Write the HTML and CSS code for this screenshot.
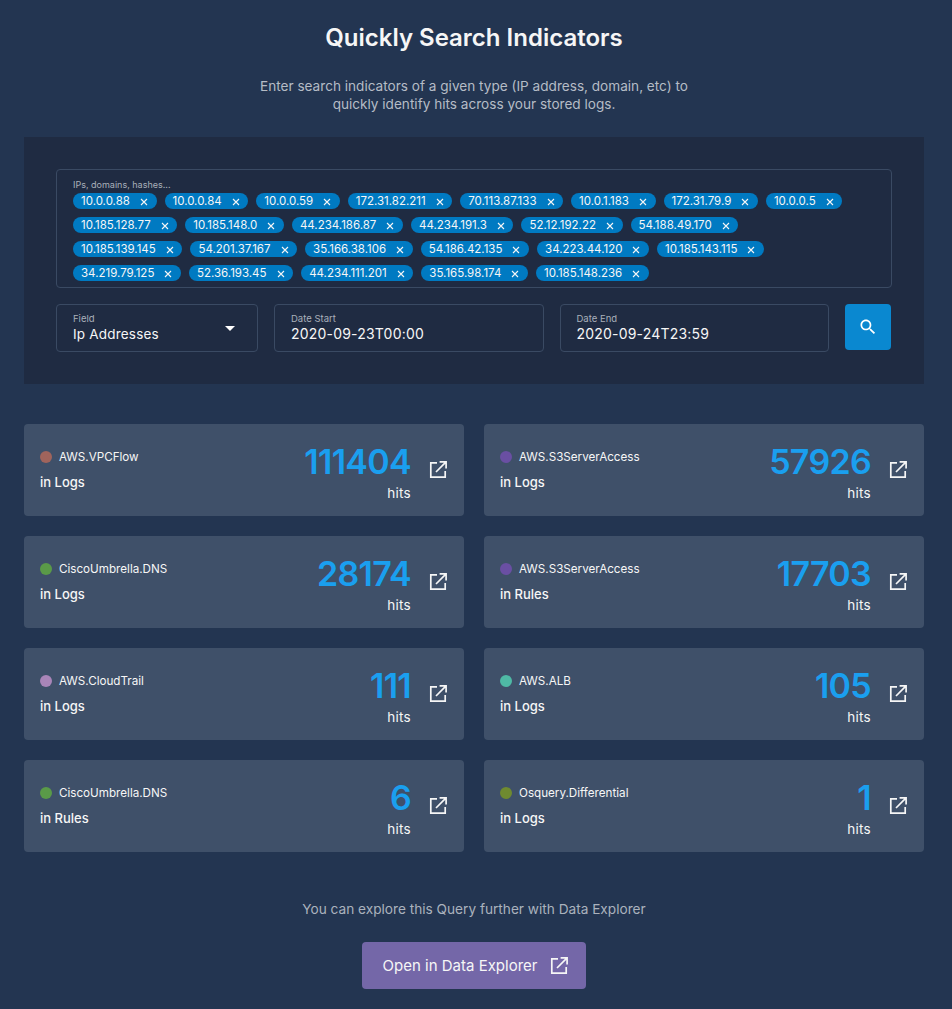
FILE: index.html
```html
<!DOCTYPE html>
<html lang="en">
<head>
  <meta charset="UTF-8">
  <meta name="viewport" content="width=device-width, initial-scale=1.0">
  <title>Quickly Search Indicators</title>
  <link rel="stylesheet" href="styles.css">
</head>
<body>
  <svg class="icon-defs" width="0" height="0">
    <symbol id="open-icon" viewBox="0 0 24 24">
      <path d="M11 4.8H4.8v14.4h14.4V13M13.6 3.9h6.5v6.5M19.8 4.2L10 14" fill="none" stroke="currentColor" stroke-width="1.7"/>
    </symbol>
    <symbol id="close-icon" viewBox="0 0 8 8">
      <path d="M1 1l6 6M7 1L1 7" fill="none" stroke="currentColor" stroke-width="1.1"/>
    </symbol>
  </svg>

  <h1 class="title">Quickly Search Indicators</h1>
  <p class="intro">Enter search indicators of a given type (IP address, domain, etc) to<br>quickly identify hits across your stored logs.</p>

  <section class="panel">
    <div class="chip-box">
      <div class="box-label">IPs, domains, hashes...</div>
      <div class="chip-row">
        <span class="chip">10.0.0.88<svg class="chip-x"><use href="#close-icon"/></svg></span>
        <span class="chip">10.0.0.84<svg class="chip-x"><use href="#close-icon"/></svg></span>
        <span class="chip">10.0.0.59<svg class="chip-x"><use href="#close-icon"/></svg></span>
        <span class="chip">172.31.82.211<svg class="chip-x"><use href="#close-icon"/></svg></span>
        <span class="chip">70.113.87.133<svg class="chip-x"><use href="#close-icon"/></svg></span>
        <span class="chip">10.0.1.183<svg class="chip-x"><use href="#close-icon"/></svg></span>
        <span class="chip">172.31.79.9<svg class="chip-x"><use href="#close-icon"/></svg></span>
        <span class="chip">10.0.0.5<svg class="chip-x"><use href="#close-icon"/></svg></span>
      </div>
      <div class="chip-row">
        <span class="chip">10.185.128.77<svg class="chip-x"><use href="#close-icon"/></svg></span>
        <span class="chip">10.185.148.0<svg class="chip-x"><use href="#close-icon"/></svg></span>
        <span class="chip">44.234.186.87<svg class="chip-x"><use href="#close-icon"/></svg></span>
        <span class="chip">44.234.191.3<svg class="chip-x"><use href="#close-icon"/></svg></span>
        <span class="chip">52.12.192.22<svg class="chip-x"><use href="#close-icon"/></svg></span>
        <span class="chip">54.188.49.170<svg class="chip-x"><use href="#close-icon"/></svg></span>
      </div>
      <div class="chip-row">
        <span class="chip">10.185.139.145<svg class="chip-x"><use href="#close-icon"/></svg></span>
        <span class="chip">54.201.37.167<svg class="chip-x"><use href="#close-icon"/></svg></span>
        <span class="chip">35.166.38.106<svg class="chip-x"><use href="#close-icon"/></svg></span>
        <span class="chip">54.186.42.135<svg class="chip-x"><use href="#close-icon"/></svg></span>
        <span class="chip">34.223.44.120<svg class="chip-x"><use href="#close-icon"/></svg></span>
        <span class="chip">10.185.143.115<svg class="chip-x"><use href="#close-icon"/></svg></span>
      </div>
      <div class="chip-row">
        <span class="chip">34.219.79.125<svg class="chip-x"><use href="#close-icon"/></svg></span>
        <span class="chip">52.36.193.45<svg class="chip-x"><use href="#close-icon"/></svg></span>
        <span class="chip">44.234.111.201<svg class="chip-x"><use href="#close-icon"/></svg></span>
        <span class="chip">35.165.98.174<svg class="chip-x"><use href="#close-icon"/></svg></span>
        <span class="chip">10.185.148.236<svg class="chip-x"><use href="#close-icon"/></svg></span>
      </div>
    </div>

    <div class="filters">
      <div class="field field-select">
        <div class="field-label">Field</div>
        <div class="field-value">Ip Addresses</div>
        <svg class="select-arrow" viewBox="0 0 24 24"><path d="M7 10l5 5 5-5z"/></svg>
      </div>
      <div class="field field-date">
        <div class="field-label">Date Start</div>
        <div class="field-value">2020-09-23T00:00</div>
      </div>
      <div class="field field-date">
        <div class="field-label">Date End</div>
        <div class="field-value">2020-09-24T23:59</div>
      </div>
      <button class="search-btn" aria-label="Search">
        <svg viewBox="0 0 24 24"><path d="M15.5 14h-.79l-.28-.27C15.41 12.59 16 11.11 16 9.5 16 5.91 13.09 3 9.5 3S3 5.91 3 9.5 5.91 16 9.5 16c1.61 0 3.09-.59 4.23-1.57l.27.28v.79l5 4.99L20.49 19l-4.99-5zm-6 0C7.01 14 5 11.99 5 9.5S7.01 5 9.5 5 14 7.01 14 9.5 11.99 14 9.5 14z"/></svg>
      </button>
    </div>
  </section>

  <section class="cards">
    <div class="card">
      <div class="card-info">
        <div class="log-type"><span class="dot dot-vpc"></span>AWS.VPCFlow</div>
        <div class="log-scope">in Logs</div>
      </div>
      <div class="hits"><div class="hits-count">111404</div><div class="hits-label">hits</div></div>
      <svg class="open-icon"><use href="#open-icon"/></svg>
    </div>
    <div class="card">
      <div class="card-info">
        <div class="log-type"><span class="dot dot-s3"></span>AWS.S3ServerAccess</div>
        <div class="log-scope">in Logs</div>
      </div>
      <div class="hits"><div class="hits-count">57926</div><div class="hits-label">hits</div></div>
      <svg class="open-icon"><use href="#open-icon"/></svg>
    </div>
    <div class="card">
      <div class="card-info">
        <div class="log-type"><span class="dot dot-cisco"></span>CiscoUmbrella.DNS</div>
        <div class="log-scope">in Logs</div>
      </div>
      <div class="hits"><div class="hits-count">28174</div><div class="hits-label">hits</div></div>
      <svg class="open-icon"><use href="#open-icon"/></svg>
    </div>
    <div class="card">
      <div class="card-info">
        <div class="log-type"><span class="dot dot-s3"></span>AWS.S3ServerAccess</div>
        <div class="log-scope">in Rules</div>
      </div>
      <div class="hits"><div class="hits-count">17703</div><div class="hits-label">hits</div></div>
      <svg class="open-icon"><use href="#open-icon"/></svg>
    </div>
    <div class="card">
      <div class="card-info">
        <div class="log-type"><span class="dot dot-trail"></span>AWS.CloudTrail</div>
        <div class="log-scope">in Logs</div>
      </div>
      <div class="hits"><div class="hits-count">111</div><div class="hits-label">hits</div></div>
      <svg class="open-icon"><use href="#open-icon"/></svg>
    </div>
    <div class="card">
      <div class="card-info">
        <div class="log-type"><span class="dot dot-alb"></span>AWS.ALB</div>
        <div class="log-scope">in Logs</div>
      </div>
      <div class="hits"><div class="hits-count">105</div><div class="hits-label">hits</div></div>
      <svg class="open-icon"><use href="#open-icon"/></svg>
    </div>
    <div class="card">
      <div class="card-info">
        <div class="log-type"><span class="dot dot-cisco"></span>CiscoUmbrella.DNS</div>
        <div class="log-scope">in Rules</div>
      </div>
      <div class="hits"><div class="hits-count">6</div><div class="hits-label">hits</div></div>
      <svg class="open-icon"><use href="#open-icon"/></svg>
    </div>
    <div class="card">
      <div class="card-info">
        <div class="log-type"><span class="dot dot-osquery"></span>Osquery.Differential</div>
        <div class="log-scope">in Logs</div>
      </div>
      <div class="hits"><div class="hits-count">1</div><div class="hits-label">hits</div></div>
      <svg class="open-icon"><use href="#open-icon"/></svg>
    </div>
  </section>

  <footer class="explore">
    <p class="explore-text">You can explore this Query further with Data Explorer</p>
    <button class="explore-btn">Open in Data Explorer<svg class="open-icon"><use href="#open-icon"/></svg></button>
  </footer>
</body>
</html>
```

FILE: styles.css
```css
html {
  box-sizing: border-box;
}
*, *:before, *:after {
  box-sizing: inherit;
}
body {
  margin: 0;
  padding: 24px 28px 20px 24px;
  min-height: 1009px;
  background-color: #233551;
  color: #f6f6f6;
  font-family: "Inter", "Noto Sans", sans-serif;
}
.icon-defs { position: absolute; }

.title {
  margin: 0;
  height: 28px;
  font-size: 24px;
  line-height: 28px;
  font-weight: 600;
  text-align: center;
}
.intro {
  margin: 25px 0 0;
  height: 41px;
  font-size: 13.6px;
  line-height: 18px;
  color: #b5bcc6;
  text-align: center;
}

.panel {
  margin-top: 19px;
  padding: 32px;
  height: 247px;
  background-color: #1f2b42;
}
.chip-box {
  height: 119px;
  padding: 9px 16px 0;
  border: 1px solid #3a4a63;
  border-radius: 4px;
}
.box-label {
  height: 14px;
  font-size: 9px;
  line-height: 11px;
  color: #a9b0ba;
}
.chip-row {
  display: flex;
  gap: 8px;
  margin-bottom: 8px;
}
.chip {
  display: flex;
  align-items: center;
  justify-content: space-between;
  height: 16px;
  padding: 0 8.6px 0 8px;
  border-radius: 8px;
  background-color: #007ac2;
  font-size: 11.5px;
  line-height: 16px;
  white-space: nowrap;
}
.chip-x {
  width: 8px;
  height: 8px;
  margin-left: 10px;
  margin-top: 1px;
}

.filters {
  display: flex;
  align-items: flex-start;
  gap: 16px;
  margin-top: 16px;
}
.field {
  position: relative;
  height: 48px;
  padding: 8px 16px 0;
  border: 1px solid #3a4a63;
  border-radius: 4px;
}
.field-select { width: 202px; }
.field-date { width: 269.5px; }
.field-label {
  height: 12px;
  font-size: 9.5px;
  line-height: 12px;
  color: #a9b0ba;
}
.field-value {
  margin-top: -1px;
  font-size: 14px;
  line-height: 20px;
  letter-spacing: .2px;
}
.field-select .field-value { font-size: 13.5px; }
.select-arrow {
  position: absolute;
  top: 11px;
  right: 15px;
  width: 24px;
  height: 24px;
  fill: #fff;
}
.search-btn {
  display: flex;
  align-items: center;
  justify-content: center;
  width: 46px;
  height: 46px;
  padding: 0;
  border: 0;
  border-radius: 4px;
  background-color: #0a88d0;
}
.search-btn svg {
  width: 20px;
  height: 20px;
  fill: #fff;
}

.cards {
  display: grid;
  grid-template-columns: 440px 440px;
  grid-auto-rows: 92px;
  gap: 20px;
  margin-top: 40px;
}
.card {
  display: flex;
  align-items: center;
  padding: 0 14px 0 16px;
  border-radius: 4px;
  background-color: #3f5069;
}
.card-info { flex: 1; }
.log-type {
  display: flex;
  align-items: center;
  font-size: 11.65px;
  line-height: 16px;
}
.dot {
  width: 12px;
  height: 12px;
  margin-right: 7px;
  border-radius: 50%;
}
.dot-vpc { background-color: #a0645c; }
.dot-s3 { background-color: #6a4fa3; }
.dot-cisco { background-color: #5a9a48; }
.dot-trail { background-color: #a985b8; }
.dot-alb { background-color: #4fb9a5; }
.dot-osquery { background-color: #6f8a30; }
.log-scope {
  margin-top: 8px;
  font-size: 13px;
  line-height: 18px;
  font-weight: 500;
}
.hits {
  padding-top: 3px;
  text-align: right;
}
.hits-count {
  font-size: 34px;
  line-height: 40px;
  font-weight: 600;
  letter-spacing: -.7px;
  color: #1a9fef;
}
.hits-label {
  margin-top: 2px;
  font-size: 13.5px;
  line-height: 18px;
  letter-spacing: .3px;
}
.open-icon {
  flex: none;
  width: 24px;
  height: 24px;
  margin-left: 15px;
  color: #f6f6f6;
}

.explore { text-align: center; }
.explore-text {
  margin: 48px 0 0;
  font-size: 13.65px;
  line-height: 18px;
  color: #aab2bd;
}
.explore-btn {
  display: inline-flex;
  align-items: center;
  height: 47px;
  margin-top: 24px;
  padding: 0 15px 0 21px;
  border: 0;
  border-radius: 4px;
  background-color: #7467a8;
  color: #f6f6f6;
  font-family: inherit;
  font-size: 15px;
  font-weight: 400;
}
.explore-btn .open-icon { margin-left: 10px; }
```
